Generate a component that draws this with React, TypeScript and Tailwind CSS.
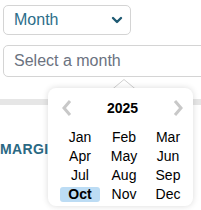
import React from "react";

const months = ["Jan","Feb","Mar","Apr","May","Jun","Jul","Aug","Sep","Oct","Nov","Dec"];

export default function App() {
  return (
    <div className="relative w-[201px] h-[210px] overflow-hidden bg-white" style={{ fontFamily: '"Liberation Sans", Arial, sans-serif' }}>
      <div className="flex flex-col pl-[3px] pt-[5px]">
        <div className="w-[128px] h-[30px] border border-[#d4d4d4] rounded-[5px] flex items-center justify-between pl-[10px] pr-[7px]">
          <span className="text-[16px] text-[#2c6e8a]">Month</span>
          <svg width="12" height="8" viewBox="0 0 12 8">
            <path d="M2 2 L6 6 L10 2" fill="none" stroke="#1f5a73" strokeWidth="2.4" strokeLinecap="round" strokeLinejoin="round" />
          </svg>
        </div>
        <div className="mt-[10px] w-[230px] h-[32px] border border-[#d4d4d4] rounded-[5px] flex items-center pl-[10px]">
          <span className="text-[16px] text-[#6b7280]">Select a month</span>
        </div>
      </div>
      <div className="mt-[22px] h-[6px] bg-[#e6e6e6]" />
      <div className="mt-[35px] text-[14px] leading-[18px] font-bold text-[#2a6883] tracking-[0.4px]">MARGIN</div>

      {/* arrow */}
      <svg className="absolute left-[112px] top-[79px]" width="24" height="11" viewBox="0 0 24 11">
        <path d="M0 10.5 L12 0.5 L24 10.5" fill="#ffffff" stroke="#d0d0d0" strokeWidth="1" />
      </svg>
      {/* popup */}
      <div className="absolute left-[48px] top-[88px] w-[145px] h-[118px] bg-white rounded-[8px] shadow-[0_0_6px_rgba(0,0,0,0.15)]">
        <div className="flex items-center justify-between pt-[10px] pl-[13px] pr-[9px] h-[30px]">
          <svg width="12" height="20" viewBox="0 0 12 20">
            <path d="M9 3 L3 10 L9 17" fill="none" stroke="#c8c8c8" strokeWidth="3" strokeLinejoin="miter" />
          </svg>
          <span className="text-[14px] font-bold text-black">2025</span>
          <svg width="12" height="20" viewBox="0 0 12 20">
            <path d="M3 3 L9 10 L3 17" fill="none" stroke="#c8c8c8" strokeWidth="3" strokeLinejoin="miter" />
          </svg>
        </div>
        <div className="mt-[10px] pl-[10px] grid grid-cols-[44px_44px_44px] auto-rows-[19px]">
          {months.map((m) => (
            <div key={m} className="flex items-center justify-center">
              <span
                className={
                  m === "Oct"
                    ? "w-[40px] h-[15px] rounded-[3px] bg-[#bcdcf4] flex items-center justify-center text-[14px] text-black font-bold"
                    : "text-[14px] text-black"
                }
              >
                {m}
              </span>
            </div>
          ))}
        </div>
      </div>
    </div>
  );
}
